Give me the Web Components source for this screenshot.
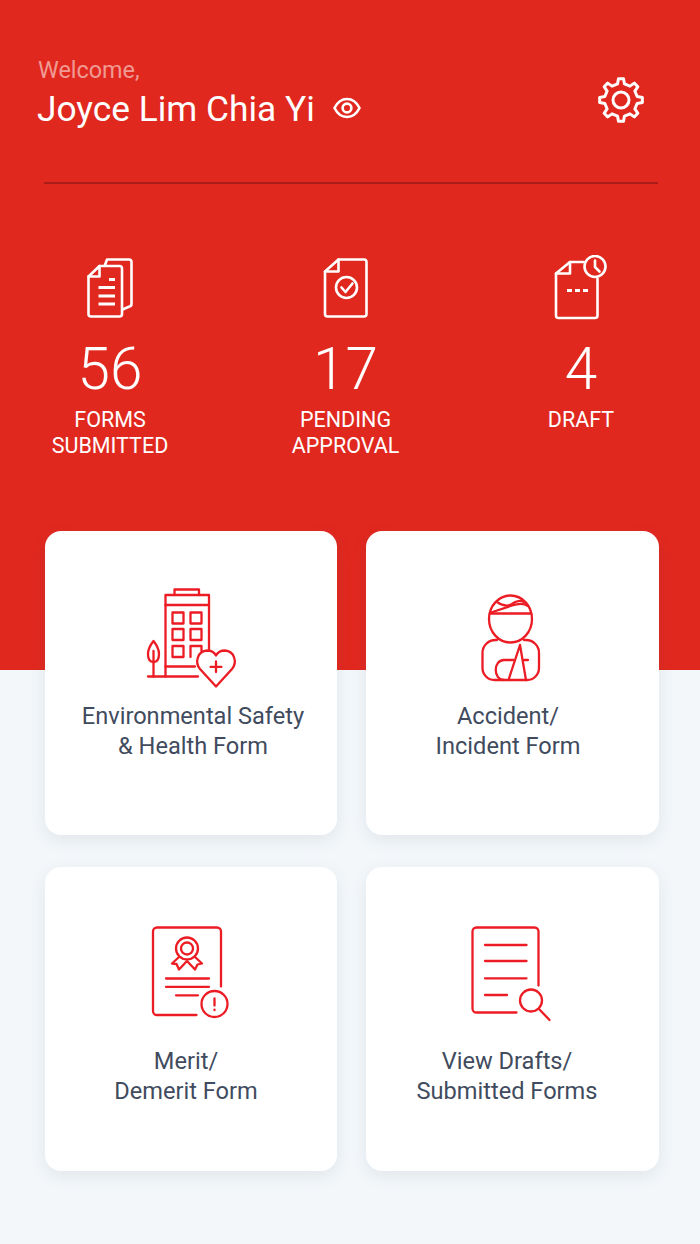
<!DOCTYPE html>
<html lang="en">
<head>
<meta charset="utf-8">
<title>Forms</title>
<style>
    html, body { margin: 0; padding: 0; background: #f3f7fa; }
    body { font-family: Roboto, "Liberation Sans", sans-serif; }
</style>
</head>
<body>
<app-screen>
    <stat-item slot="stats" value="56">
        <svg slot="icon" viewBox="75 255 70 66" width="70" height="66" fill="none" stroke="#fff" stroke-width="2.6" stroke-linecap="round" stroke-linejoin="round">
            <path d="M88.5 276.5 L99.5 266 H119.5 a2.5 2.5 0 0 1 2.5 2.5 V314 a2.5 2.5 0 0 1 -2.5 2.5 H91 a2.5 2.5 0 0 1 -2.5 -2.5 Z"/>
            <path d="M99.5 266 V276.5 H88.5"/>
            <path d="M105 265 L107 259.5 H129 a2.5 2.5 0 0 1 2.5 2.5 V304 a2.5 2.5 0 0 1 -2 2.5 L122.5 309.5"/>
            <path d="M109 279.5 H115 M98.5 287.5 H115 M98.5 296 H115 M98.5 304 H115" stroke-width="3" stroke-linecap="butt"/>
        </svg>
        <slot-text slot="label">FORMS<br>SUBMITTED</slot-text>
    </stat-item>
    <stat-item slot="stats" value="17">
        <svg slot="icon" viewBox="311 255 70 66" width="70" height="66" fill="none" stroke="#fff" stroke-width="2.6" stroke-linecap="round" stroke-linejoin="round">
            <path d="M325 271.5 L338.5 259.5 H364 a2.5 2.5 0 0 1 2.5 2.5 V314 a2.5 2.5 0 0 1 -2.5 2.5 H327.5 a2.5 2.5 0 0 1 -2.5 -2.5 Z"/>
            <path d="M338.5 259.5 V271.5 H325"/>
            <circle cx="346.5" cy="287.5" r="10.5"/>
            <path d="M341.5 287.5 L345.5 292 L352.5 283.5"/>
        </svg>
        <slot-text slot="label">PENDING<br>APPROVAL</slot-text>
    </stat-item>
    <stat-item slot="stats" value="4">
        <svg slot="icon" viewBox="546 255 70 66" width="70" height="66" fill="none" stroke="#fff" stroke-width="2.6" stroke-linecap="round" stroke-linejoin="round">
            <path d="M583.5 262 H570 L556 273.5 V315.5 a2.5 2.5 0 0 0 2.5 2.5 H595 a2.5 2.5 0 0 0 2.5 -2.5 V278.5"/>
            <path d="M570 262 V273.5 H556"/>
            <circle cx="595" cy="266.5" r="10.5"/>
            <path d="M595 260.5 V267 L599.5 271.5"/>
            <path d="M567 290.5 H572 M575 290.5 H580 M583 290.5 H588" stroke-width="3.2" stroke-linecap="butt"/>
        </svg>
        <slot-text slot="label">DRAFT</slot-text>
    </stat-item>

    <form-card slot="cards" style="--shift-l:4px;--text-top:6px">
        <svg slot="icon" viewBox="130 575 120 120" width="120" height="120" fill="none" stroke="#ec1c24" stroke-width="2.3" stroke-linecap="round" stroke-linejoin="round">
            <path d="M174.5 595 V589.5 H199 V595"/>
            <path d="M165.5 676.5 V595 H209 V649"/>
            <path d="M165.5 605 H209"/>
            <path d="M172.5 612.5 H183.5 V623.5 H172.5 Z M190.5 612.5 H201.5 V623.5 H190.5 Z M172.5 629 H183.5 V640 H172.5 Z M190.5 629 H201.5 V640 H190.5 Z M172.5 646 H183.5 V657 H172.5 Z M190.5 657 V646 H201.5 V651"/>
            <path d="M165.5 666.5 H195"/>
            <path d="M148 676.5 H198"/>
            <path d="M153.5 641 C149.5 646 148 650 148 654 C148 659 150 662 153.5 662 C157 662 159 659 159 654 C159 650 157.5 646 153.5 641 Z"/>
            <path d="M153.5 676.5 V651"/>
            <path d="M216 686.5 L200 669 C194.5 662.5 197.5 651 207 650.5 C211 650.5 214.5 652.5 216 655.5 C217.5 652.5 221 650.5 225 650.5 C234.5 651 237.5 662.5 232 669 Z"/>
            <path d="M216 661.5 V672 M210.5 666.8 H221.5"/>
        </svg>
        Environmental Safety<br>&amp; Health Form
    </form-card>
    <form-card slot="cards" style="--shift-r:9px;--text-top:6px">
        <svg slot="icon" viewBox="451 575 120 120" width="120" height="120" fill="none" stroke="#ec1c24" stroke-width="2.3" stroke-linecap="round" stroke-linejoin="round">
            <ellipse cx="510.5" cy="619" rx="21.5" ry="23.5"/>
            <path d="M490 613.5 H531"/>
            <path d="M491 612.5 L512 605.5 C 518 603.5 524 603 528 606"/>
            <path d="M497 602 C 503 606 508 606.5 512 604 C 516 601 521 600 524 602"/>
            <path d="M497 640 H495.5 a13 13 0 0 0 -13 13 V668 a12 12 0 0 0 12 12 H527 a12 12 0 0 0 12 -12 V653 a13 13 0 0 0 -13 -13 H524"/>
            <path d="M520 645 L508.5 680 M520 645 L526 680"/>
            <path d="M513.5 660 H504 C 493 660 493 680 504 680"/>
            <path d="M524 660 H528"/>
        </svg>
        Accident/<br>Incident Form
    </form-card>
    <form-card slot="cards" style="--shift-r:10px;--text-top:15px">
        <svg slot="icon" viewBox="130 911 120 120" width="120" height="120" fill="none" stroke="#ec1c24" stroke-width="2.3" stroke-linecap="round" stroke-linejoin="round">
            <path d="M196.5 1015 H157 a4 4 0 0 1 -4 -4 V931.5 a4 4 0 0 1 4 -4 H217 a4 4 0 0 1 4 4 V986.5"/>
            <circle cx="187" cy="948.5" r="11"/>
            <circle cx="187" cy="948.5" r="6"/>
            <path d="M179 957 L172 963.5 L176.5 964 L179 969.5 L186.5 961.5"/>
            <path d="M195 957 L202 963.5 L197.5 964.5 L195 969.5 L187.5 961.5"/>
            <path d="M166 978.5 H209 M166 986.8 H209 M176 995.3 H198"/>
            <circle cx="214.5" cy="1004" r="13"/>
            <path d="M214.5 998.5 V1005.5 M214.5 1009.6 V1010.2"/>
        </svg>
        Merit/<br>Demerit Form
    </form-card>
    <form-card slot="cards" style="--shift-r:11px;--text-top:15px">
        <svg slot="icon" viewBox="451 911 120 120" width="120" height="120" fill="none" stroke="#ec1c24" stroke-width="2.3" stroke-linecap="round" stroke-linejoin="round">
            <path d="M516.5 1012.5 H476.5 a4 4 0 0 1 -4 -4 V931.5 a4 4 0 0 1 4 -4 H534.5 a4 4 0 0 1 4 4 V985.5"/>
            <path d="M485 945 H526.5 M485 961 H526.5 M485 978.3 H526.5 M485 995 H507"/>
            <circle cx="531" cy="1000.5" r="11"/>
            <path d="M539 1009 L549.5 1020"/>
        </svg>
        View Drafts/<br>Submitted Forms
    </form-card>
</app-screen>

<script>
    // gear outline, teeth worked out from radii instead of a long hand path
    function gearPath(cx, cy, outer, root, teeth) {
        let d = '';
        const step = Math.PI * 2 / teeth;
        const pt = (r, a) => (cx + r * Math.cos(a)).toFixed(2) + ' ' + (cy + r * Math.sin(a)).toFixed(2);
        for (let i = 0; i < teeth; i++) {
            const a = i * step - Math.PI / 2;
            d += (i ? 'L' : 'M') + pt(root, a - step * 0.27);
            d += 'L' + pt(outer, a - step * 0.15);
            d += 'L' + pt(outer, a + step * 0.15);
            d += 'L' + pt(root, a + step * 0.27);
        }
        return d + 'Z';
    }

    class SlotText extends HTMLElement {
        constructor() {
            super();
            this.attachShadow({ mode: 'open' });
            this.shadowRoot.innerHTML = `<style>:host { display: block; }</style><slot></slot>`;
        }
    }

    class TopBar extends HTMLElement {
        constructor() {
            super();
            this.attachShadow({ mode: 'open' });
            this.shadowRoot.innerHTML = `
                <style>
                    :host {
                        display: flex;
                        justify-content: space-between;
                        align-items: flex-start;
                        padding: 55px 54px 0 37px;
                        color: #fff;
                    }
                    .welcome {
                        font-size: 23.4px;
                        line-height: 30px;
                        color: #f09a93;
                        margin-left: 1px;
                    }
                    .name {
                        display: flex;
                        align-items: center;
                        gap: 17px;
                        margin-top: 4px;
                        font-size: 35.3px;
                        line-height: 40px;
                    }
                    .name svg { margin-top: -2px; }
                    .gear { margin-top: 20px; display: block; }
                </style>
                <div>
                    <div class="welcome">Welcome,</div>
                    <div class="name">
                        <span>Joyce Lim Chia Yi</span>
                        <svg width="30" height="24" viewBox="0 0 30 24" fill="none" stroke="#fff" stroke-width="2.6">
                            <path d="M2.5 12 C6 5 10 3 15 3 C20 3 24 5 27.5 12 C24 19 20 21 15 21 C10 21 6 19 2.5 12 Z"/>
                            <circle cx="15" cy="12" r="4.4"/>
                        </svg>
                    </div>
                </div>
                <svg class="gear" width="50" height="50" viewBox="0 0 50 50" fill="none" stroke="#fff" stroke-width="3" stroke-linejoin="round">
                    <path d="${gearPath(25, 25, 21.5, 16.5, 8)}"/>
                    <circle cx="25" cy="25" r="8"/>
                </svg>
            `;
        }
    }

    class StatItem extends HTMLElement {
        constructor() {
            super();
            this.attachShadow({ mode: 'open' });
            this.shadowRoot.innerHTML = `
                <style>
                    :host {
                        display: flex;
                        flex-direction: column;
                        align-items: center;
                        color: #fff;
                        text-align: center;
                    }
                    ::slotted(svg) { display: block; }
                    .value {
                        margin-top: 18px;
                        font-size: 58.5px;
                        font-weight: 300;
                        line-height: 60px;
                    }
                    .label {
                        margin-top: 8px;
                        font-size: 21.5px;
                        line-height: 26px;
                    }
                </style>
                <slot name="icon"></slot>
                <div class="value"></div>
                <div class="label"><slot name="label"></slot></div>
            `;
        }

        connectedCallback() {
            this.shadowRoot.querySelector('.value').textContent = this.getAttribute('value');
        }
    }

    class FormCard extends HTMLElement {
        constructor() {
            super();
            this.attachShadow({ mode: 'open' });
            this.shadowRoot.innerHTML = `
                <style>
                    :host {
                        display: block;
                        box-sizing: border-box;
                        height: 304px;
                        padding-top: 44px;
                        background: #fff;
                        border-radius: 16px;
                        box-shadow: 0 5px 16px rgba(70, 90, 120, 0.1);
                    }
                    ::slotted(svg) { display: block; margin-left: 85px; }
                    .text {
                        margin-top: var(--text-top, 6px);
                        padding-left: var(--shift-l, 0);
                        padding-right: var(--shift-r, 0);
                        font-size: 23.6px;
                        line-height: 30px;
                        text-align: center;
                        color: #414b5e;
                    }
                </style>
                <slot name="icon"></slot>
                <div class="text"><slot></slot></div>
            `;
        }
    }

    class AppScreen extends HTMLElement {
        constructor() {
            super();
            this.attachShadow({ mode: 'open' });
            this.shadowRoot.innerHTML = `
                <style>
                    :host {
                        display: block;
                        height: 1244px;
                        overflow: hidden;
                        background: #f3f7fa;
                        font-family: Roboto, "Liberation Sans", sans-serif;
                    }
                    .hero {
                        height: 670px;
                        box-sizing: border-box;
                        background: #e1281f;
                    }
                    .rule {
                        height: 2px;
                        margin: 53px 42px 0 44px;
                        background: #a81d18;
                    }
                    .stats {
                        display: grid;
                        grid-template-columns: repeat(3, 200px);
                        column-gap: 35.5px;
                        padding: 71px 0 0 10px;
                    }
                    .cards {
                        display: grid;
                        grid-template-columns: 292px 293px;
                        grid-auto-rows: 304px;
                        column-gap: 29px;
                        row-gap: 32px;
                        margin: -139px 0 0 45px;
                    }
                </style>
                <div class="hero">
                    <top-bar></top-bar>
                    <div class="rule"></div>
                    <div class="stats"><slot name="stats"></slot></div>
                </div>
                <div class="cards"><slot name="cards"></slot></div>
            `;
        }
    }

    customElements.define('slot-text', SlotText);
    customElements.define('top-bar', TopBar);
    customElements.define('stat-item', StatItem);
    customElements.define('form-card', FormCard);
    customElements.define('app-screen', AppScreen);
</script>
</body>
</html>
